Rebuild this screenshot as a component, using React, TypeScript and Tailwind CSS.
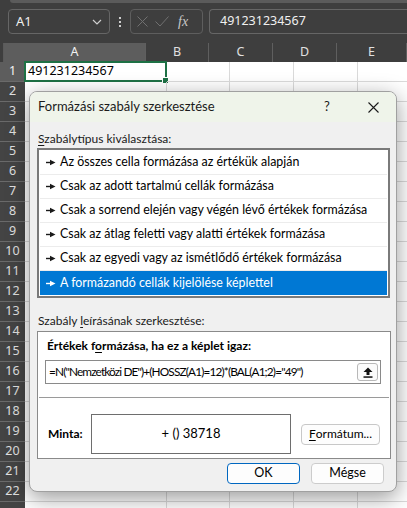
import React from "react";

const cols = [
  { name: "A", w: 142 },
  { name: "B", w: 63 },
  { name: "C", w: 64 },
  { name: "D", w: 64 },
  { name: "E", w: 70 },
];

const rows = Array.from({ length: 23 }, (_, i) => i + 1);

const items = [
  "Az összes cella formázása az értékük alapján",
  "Csak az adott tartalmú cellák formázása",
  "Csak a sorrend elején vagy végén lévő értékek formázása",
  "Csak az átlag feletti vagy alatti értékek formázása",
  "Csak az egyedi vagy az ismétlődő értékek formázása",
  "A formázandó cellák kijelölése képlettel",
];

function Arrow({ color }: { color: string }) {
  return (
    <svg width="10" height="7" viewBox="0 0 10 7" className="shrink-0">
      <rect x="0" y="2.8" width="5" height="1.4" fill={color} />
      <path d="M4 0.8 L9.5 3.5 L4 6.2 Z" fill={color} />
    </svg>
  );
}

export default function App() {
  return (
    <div
      className="relative w-[407px] h-[508px] overflow-hidden bg-[#3e3e3e] text-black"
      style={{ fontFamily: '"Noto Sans", "Open Sans", sans-serif' }}
    >
      {/* top strip */}
      <div className="h-[3px] ml-[10px] bg-[#5b5b5b] rounded-bl-[4px]" />
      {/* formula bar */}
      <div className="h-[40px] flex items-center pl-[8px] gap-[6px] pb-[3px]">
        <div className="w-[102px] h-[25px] border border-[#666] rounded-[4px] flex items-center justify-between px-[7px]">
          <span className="text-[13px] text-[#f0f0f0]">A1</span>
          <svg width="10" height="6" viewBox="0 0 10 6">
            <path d="M1 1 L5 5 L9 1" stroke="#cfcfcf" strokeWidth="1.2" fill="none" />
          </svg>
        </div>
        <div className="flex flex-col gap-[2px] mx-[3px]">
          <div className="w-[2px] h-[2px] bg-[#cfcfcf]" />
          <div className="w-[2px] h-[2px] bg-[#cfcfcf]" />
          <div className="w-[2px] h-[2px] bg-[#cfcfcf]" />
        </div>
        <div className="w-[73px] h-[25px] border border-[#5e5e5e] rounded-[4px] flex items-center px-[6px] gap-[7px]">
          <svg width="11" height="11" viewBox="0 0 11 11">
            <path d="M0.5 0.5 L10.5 10.5 M10.5 0.5 L0.5 10.5" stroke="#707070" strokeWidth="1" />
          </svg>
          <svg width="14" height="11" viewBox="0 0 14 11">
            <path d="M0.5 5.5 L5 10 L13.5 0.5" stroke="#707070" strokeWidth="1" fill="none" />
          </svg>
          <span
            className="text-[14px] italic text-[#c8c8c8] leading-none ml-[2px]"
            style={{ fontFamily: '"Liberation Serif", serif' }}
          >
            fx
          </span>
        </div>
        <div className="flex-1 h-[25px] border border-[#666] border-r-0 rounded-l-[4px] flex items-center pl-[10px]">
          <span className="text-[12.5px] text-[#f0f0f0]">491231234567</span>
        </div>
      </div>
      {/* column headers */}
      <div className="h-[19px] flex">
        <div className="w-[25px] h-full relative border-r border-[#5a5a5a]">
          <svg width="10" height="10" viewBox="0 0 10 10" className="absolute right-[3px] bottom-[3px]">
            <path d="M10 0 L10 10 L0 10 Z" fill="#d8d8d8" />
          </svg>
        </div>
        {cols.map((c, i) => (
          <div
            key={c.name}
            style={{ width: c.w }}
            className={`shrink-0 h-full flex items-center justify-center text-[12.5px] border-r border-[#5f5f5f] ${
              i === 0 ? "bg-[#5d5d5d] text-[#f2f2f2]" : "text-[#e0e0e0]"
            }`}
          >
            {c.name}
          </div>
        ))}
      </div>
      {/* body */}
      <div className="flex">
        <div className="w-[25px] shrink-0 flex flex-col">
          {rows.map((r) => (
            <div
              key={r}
              className={`h-[20px] shrink-0 flex items-center justify-center text-[12.5px] border-b border-[#6a6a6a] ${
                r === 1 ? "bg-[#5d5d5d] text-[#f2f2f2]" : "bg-[#444444] text-[#e0e0e0]"
              }`}
            >
              {r <= 22 ? r : ""}
            </div>
          ))}
        </div>
        <div className="flex-1 bg-white flex flex-col">
          {rows.map((r) => (
            <div key={r} className="h-[20px] shrink-0 flex">
              {cols.map((c, i) => (
                <div
                  key={c.name}
                  style={{ width: c.w }}
                  className="shrink-0 h-full border-r border-b border-[#dadada] relative"
                >
                  {r === 1 && i === 0 && (
                    <div className="absolute -left-[1px] -top-[1px] right-[-1px] bottom-[-1px] border-2 border-[#1e7145] flex items-center pl-[2px]">
                      <span className="text-[12.5px] text-black">491231234567</span>
                      <div className="absolute right-[-4px] bottom-[-4px] w-[5px] h-[5px] bg-[#1e7145] border border-white box-content" />
                    </div>
                  )}
                </div>
              ))}
            </div>
          ))}
        </div>
      </div>

      {/* dialog */}
      <div
        className="absolute left-[29px] top-[91px] w-[368px] h-[401px] rounded-[8px] border border-[#a0a0a0] bg-[#f0f0f0] shadow-[0_6px_22px_rgba(0,0,0,0.4)] overflow-hidden flex flex-col text-[12px]"
        style={{ fontFamily: 'Lato, "Noto Sans", sans-serif' }}
      >
        <div className="h-[30px] bg-[#eff4ea] flex items-center pl-[8px] shrink-0">
          <span className="flex-1 text-[13px] text-[#1a1a1a]">Formázási szabály szerkesztése</span>
          <span className="w-[46px] text-center text-[13px] text-[#1a1a1a]">?</span>
          <div className="w-[46px] flex justify-center">
            <svg width="11" height="11" viewBox="0 0 11 11">
              <path d="M0.5 0.5 L10.5 10.5 M10.5 0.5 L0.5 10.5" stroke="#1a1a1a" strokeWidth="1.1" />
            </svg>
          </div>
        </div>
        <div className="px-[7px] flex flex-col">
          <div className="pt-[9px] pb-[1px] pl-[1px] leading-[16px] text-[#1a1a1a]">
            <span className="underline underline-offset-2">S</span>zabálytípus kiválasztása:
          </div>
          <div className="w-[353px] border-2 border-[#7a7a7a] bg-white flex flex-col p-[1px]">
            {items.map((t, i) => {
              const sel = i === items.length - 1;
              return (
                <div
                  key={t}
                  className={`h-[24px] flex items-center gap-[4px] pl-[6px] text-[12.4px] ${
                    sel ? "bg-[#0078d4] text-white" : "border-b border-[#ececec] text-black"
                  }`}
                >
                  <Arrow color={sel ? "#ffffff" : "#1a1a1a"} />
                  <span>{t}</span>
                </div>
              );
            })}
          </div>
          <div className="pt-[15px] pb-[2px] pl-[1px] leading-[16px] text-[#1a1a1a]">
            Szabály <span className="underline underline-offset-2">l</span>eírásának szerkesztése:
          </div>
          <div className="w-[354px] h-[128px] border border-[#8a8a8a] bg-white flex flex-col px-[7px]">
            <div className="pt-[6px] pl-[2px] leading-[16px] font-bold text-black">
              Értékek f<span className="underline underline-offset-2">o</span>rmázása, ha ez a képlet igaz:
            </div>
            <div className="mt-[6px] h-[24px] w-[336px] border border-[#8a8a8a] flex items-center pl-[3px] pr-[2px]">
              <span className="flex-1 whitespace-nowrap text-black text-[11.8px] tracking-[-0.85px]">
                =N("Nemzetközi DE")+(HOSSZ(A1)=12)*(BAL(A1;2)="49")
              </span>
              <div className="w-[21px] h-[18px] rounded-[3px] border border-[#b8b8b8] bg-[#fbfbfb] flex items-center justify-center">
                <svg width="10" height="11" viewBox="0 0 10 11">
                  <path d="M5 0.5 L9.5 5 L6.5 5 L6.5 8 L3.5 8 L3.5 5 L0.5 5 Z" fill="#111" />
                  <rect x="0.5" y="9.3" width="9" height="1.5" fill="#111" />
                </svg>
              </div>
            </div>
            <div className="mt-[13px] border-t border-[#9a9a9a] -mx-[6px]" />
            <div className="flex items-center mt-[16px]">
              <span className="w-[46px] pl-[3px] font-bold text-black">Minta:</span>
              <div className="w-[200px] h-[40px] border border-[#6e6e6e] flex items-center justify-center text-[13px] text-black">
                + () 38718
              </div>
              <div className="ml-[10px] w-[79px] h-[21px] rounded-[4px] border border-[#c8c8c8] bg-[#fdfdfd] flex items-center justify-center text-[12px] text-black">
                <span className="underline underline-offset-2">F</span>ormátum...
              </div>
            </div>
          </div>
          <div className="flex justify-end gap-[11px] pt-[4px] pr-[5px]">
            <div className="w-[73px] h-[21px] rounded-[4px] border border-[#0067c0] bg-[#fdfdfd] flex items-center justify-center text-[12.5px] text-black">
              OK
            </div>
            <div className="w-[73px] h-[21px] rounded-[4px] border border-[#cccccc] bg-[#fdfdfd] flex items-center justify-center text-[12.5px] text-black">
              Mégse
            </div>
          </div>
        </div>
      </div>
    </div>
  );
}
